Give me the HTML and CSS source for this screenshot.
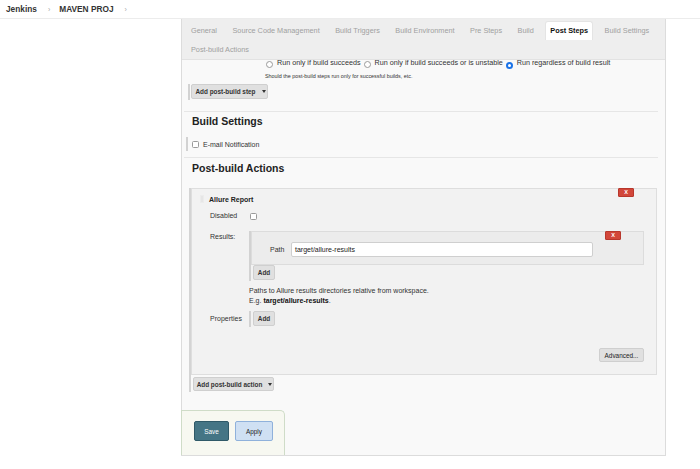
FILE: index.html
```html
<!DOCTYPE html>
<html>
<head>
<meta charset="utf-8">
<link rel="stylesheet" href="styles.css">
</head>
<body>
<div class="crumbs">
  <span class="crumb">Jenkins</span><span class="chev">›</span><span class="crumb">MAVEN PROJ</span><span class="chev chev2">›</span>
</div>
<div class="panel">
  <div class="tabbar">
    <span class="tab">General</span>
    <span class="tab">Source Code Management</span>
    <span class="tab">Build Triggers</span>
    <span class="tab">Build Environment</span>
    <span class="tab">Pre Steps</span>
    <span class="tab">Build</span>
    <span class="tab active">Post Steps</span>
    <span class="tab">Build Settings</span>
    <span class="tab">Post-build Actions</span>
  </div>

  <div class="radios">
    <span class="ropt"><span class="radio"></span>Run only if build succeeds</span>
    <span class="ropt"><span class="radio"></span>Run only if build succeeds or is unstable</span>
    <span class="ropt"><span class="radio checked"></span>Run regardless of build result</span>
  </div>
  <div class="hint">Should the post-build steps run only for successful builds, etc.</div>

  <div class="barrow step-row"><span class="btn drop">Add post-build step <span class="caret"></span></span></div>

  <div class="sep"></div>
  <h2 class="heading">Build Settings</h2>
  <div class="barrow email-row"><span class="check"></span><span>E-mail Notification</span></div>
  <div class="sep sep2"></div>
  <h2 class="heading h-post">Post-build Actions</h2>

  <div class="actions">
    <div class="box">
      <span class="xbtn">X</span>
      <div class="box-head"><span class="grip"></span><span class="box-title">Allure Report</span></div>
      <div class="form">
        <div class="lbl lbl-dis">Disabled</div>
        <div class="ctl ctl-dis"><span class="check"></span></div>

        <div class="lbl lbl-res">Results:</div>
        <div class="ctl ctl-res">
          <div class="repeat">
            <div class="nested">
              <span class="xbtn xbtn2">X</span>
              <div class="path-row"><span class="path-lbl">Path</span><span class="input">target/allure-results</span></div>
            </div>
            <span class="btn small">Add</span>
          </div>
          <div class="help">Paths to Allure results directories relative from workspace.<br>E.g. <b>target/allure-results</b>.</div>
        </div>

        <div class="lbl lbl-prop">Properties</div>
        <div class="ctl ctl-prop"><div class="repeat rep-prop"><span class="btn small">Add</span></div></div>
      </div>
      <div class="adv-row"><span class="btn adv">Advanced...</span></div>
    </div>
    <span class="btn drop action-btn">Add post-build action <span class="caret"></span></span>
  </div>

  <div class="savebar">
    <span class="btn save">Save</span>
    <span class="btn apply">Apply</span>
  </div>
</div>
</body>
</html>
```
FILE: styles.css
```css
* { box-sizing: border-box; }
body {
  margin: 0;
  background: #fff;
  font-family: "Liberation Sans", Arial, sans-serif;
  color: #333;
  font-size: 7px;
}
.crumbs {
  height: 19px;
  border-bottom: 1px solid #ececec;
  display: flex;
  align-items: center;
  padding-left: 6px;
}
.crumb { font-size: 8.3px; font-weight: bold; color: #333; }
.chev { font-size: 7px; color: #aaa; margin: 0 9px 0 11px; }
.chev2 { margin-left: 11px; }

.panel {
  margin-left: 181px;
  width: 485px;
  border-left: 1px solid #dcdcdc;
  border-right: 1px solid #dcdcdc;
  border-bottom: 1px solid #dcdcdc;
  background: #f9f9f9;
}
.tabbar {
  height: 41px;
  background: #eeeeee;
  border-bottom: 1px solid #e2e2e2;
  padding: 2px 0 0 5px;
  display: flex;
  flex-wrap: wrap;
  column-gap: 7.5px;
  align-content: flex-start;
}
.tab {
  height: 19px;
  line-height: 19px;
  padding: 0 4px;
  font-size: 7.3px;
  color: #a0a0a0;
  border-radius: 3px 3px 0 0;
}
.tab.active {
  background: #fff;
  color: #111;
  font-weight: bold;
  border: 1px solid #e4e4e4;
  border-bottom: none;
  line-height: 18px;
}

.radios {
  display: flex;
  align-items: center;
  height: 6px;
  padding-left: 84px;
  font-size: 7.2px;
  color: #333;
  margin-top: -1px;
}
.ropt { display: flex; align-items: center; margin-right: 3px; white-space: nowrap; }
.radio {
  width: 7px; height: 7px;
  border: 1px solid #9a9a9a;
  border-radius: 50%;
  background: #fff;
  margin-right: 4px;
  margin-top: 4px;
}
.radio.checked {
  background: #fff;
  border: 2px solid #1a73e8;
  margin-top: 6px;
}
.hint {
  margin-top: 7px;
  padding-left: 83px;
  font-size: 5.4px;
  color: #333;
  line-height: 8px;
}

.barrow {
  margin-left: 6px;
  border-left: 2px solid #d2d2d2;
  display: flex;
  align-items: center;
}
.step-row { margin-top: 4px; padding-left: 1px; height: 16px; align-items: flex-start; }

.btn {
  display: inline-flex;
  align-items: center;
  justify-content: center;
  background: #e0e0e0;
  border: 1px solid #cfcfcf;
  border-radius: 2px;
  color: #333;
  font-weight: bold;
  font-size: 6.4px;
  white-space: nowrap;
}
.drop { width: 77px; height: 15px; padding-left: 2px; }
.caret {
  width: 0; height: 0;
  border-left: 2.5px solid transparent;
  border-right: 2.5px solid transparent;
  border-top: 3px solid #333;
  margin-left: 6px;
}

.sep {
  margin: 11px 7px 0 2px;
  border-top: 1px solid #e6e6e6;
}
.heading {
  margin: 0;
  padding-left: 10px;
  font-size: 10.5px;
  font-weight: bold;
  color: #222;
  line-height: 18px;
}
.email-row {
  margin-left: 4px;
  margin-top: 7px;
  height: 14px;
  padding-left: 4px;
  font-size: 7px;
}
.check {
  width: 7px; height: 7px;
  border: 1px solid #9a9a9a;
  border-radius: 1.5px;
  background: #fff;
  display: inline-block;
  margin-right: 4px;
}
.sep2 { margin-top: 6px; }
.h-post { line-height: 20px; }

.actions {
  margin: 10px 0 0 7px;
  width: 468px;
  border-left: 2px solid #d4d4d4;
  padding-bottom: 1px;
}
.box {
  position: relative;
  background: #f2f2f2;
  border: 1px solid #dedede;
  padding: 5px 12px 12px 0;
}
.xbtn {
  position: absolute;
  top: -1px;
  right: 22px;
  width: 16px;
  height: 9px;
  background: #d2473a;
  border: 1px solid #b8372c;
  border-radius: 1px;
  color: #fff;
  font-weight: bold;
  font-size: 5.5px;
  line-height: 7px;
  text-align: center;
}
.box-head { display: flex; align-items: center; height: 10px; padding-left: 8px; }
.grip {
  width: 4px; height: 8px;
  background: #e6e6e6;
  border: 1px solid #ececec;
  margin-right: 5px;
}
.box-title { font-weight: bold; font-size: 7px; color: #222; }

.form {
  display: grid;
  grid-template-columns: 57px 395px;
  align-items: start;
}
.lbl { padding-left: 18px; font-size: 7px; color: #333; }
.lbl-dis { margin-top: 7px; line-height: 10px; }
.ctl-dis { margin-top: 7px; height: 10px; display: flex; align-items: center; padding-left: 1px; }
.lbl-res { margin-top: 10px; padding-top: 2px; line-height: 8px; }
.ctl-res { margin-top: 10px; }
.repeat {
  border-left: 2px solid #d2d2d2;
  padding-bottom: 1px;
}
.nested {
  position: relative;
  background: #ececec;
  border: 1px solid #dcdcdc;
  padding: 10px 0 7px 18px;
}
.xbtn2 { right: 22px; }
.path-row { display: flex; align-items: center; height: 15px; }
.path-lbl { width: 21px; font-size: 7px; color: #333; }
.input {
  width: 302px; height: 15px;
  background: #fff;
  border: 1px solid #cfcfcf;
  border-radius: 2px;
  padding-left: 3px;
  line-height: 13px;
  font-size: 7px;
  color: #222;
}
.small { width: 22px; height: 15px; margin-left: 2px; font-size: 6.4px; }
.help { margin-top: 5px; line-height: 10px; font-size: 7px; color: #333; }
.help b { color: #111; }
.lbl-prop { margin-top: 5px; line-height: 16px; }
.ctl-prop { margin-top: 5px; }
.rep-prop { height: 16px; }

.adv-row { display: flex; justify-content: flex-end; margin-top: 21px; }
.adv { width: 45px; height: 14px; font-weight: normal; font-size: 6.4px; color: #222; }

.action-btn { margin: 2px 0 0 2px; width: 81px; height: 14px; }

.savebar {
  margin: 18px 0 0 -1px;
  width: 104px;
  height: 45px;
  background: #f7f8f1;
  border: 1px solid #cfdcc8;
  border-bottom: none;
  border-radius: 0 5px 0 0;
  padding: 10px 0 0 12px;
  display: flex;
  gap: 6px;
}
.save {
  width: 35px; height: 20px;
  background: #457585;
  border: 1px solid #2f5968;
  color: #fff;
  font-weight: normal;
  font-size: 6.4px;
}
.apply {
  width: 38px; height: 20px;
  background: #cfe0f3;
  border: 1px solid #8fb1db;
  color: #222;
  font-weight: normal;
  font-size: 6.4px;
}
```
